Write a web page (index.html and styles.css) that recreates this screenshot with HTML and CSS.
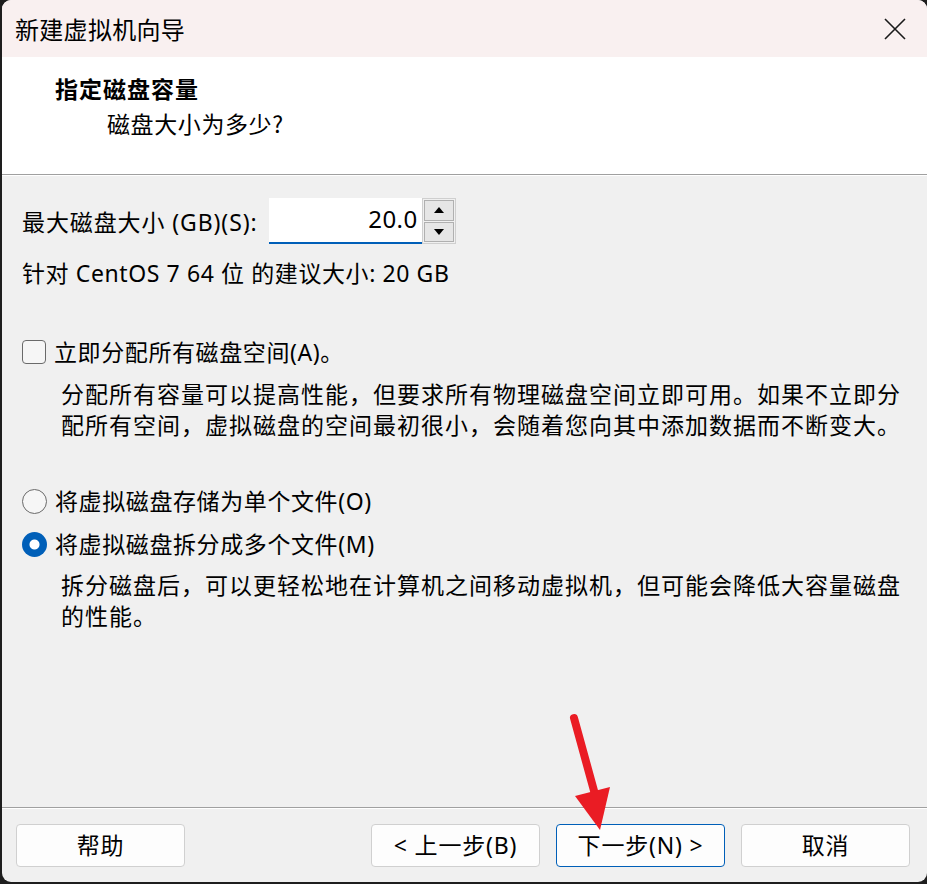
FILE: index.html
```html
<!DOCTYPE html>
<html lang="zh-CN">
<head>
<meta charset="utf-8">
<title>新建虚拟机向导</title>
<link rel="stylesheet" href="styles.css">
</head>
<body>
<div class="window">
  <div class="titlebar">
    <span class="title">新建虚拟机向导</span>
    <svg class="close" width="24" height="24" viewBox="0 0 24 24"><path d="M2 2 L22 22 M22 2 L2 22" stroke="#1a1a1a" stroke-width="1.6" fill="none"/></svg>
  </div>
  <div class="header">
    <div class="h-title">指定磁盘容量</div>
    <div class="h-sub">磁盘大小为多少?</div>
  </div>
  <div class="content">
    <div class="size-row">
      <span class="size-label">最大磁盘大小 (GB)(S):</span>
      <div class="spin">
        <div class="spin-input">20.0</div>
        <div class="spin-btns">
          <div class="spin-btn"><span class="tri-up"></span></div>
          <div class="spin-btn"><span class="tri-down"></span></div>
        </div>
      </div>
    </div>
    <div class="recommend">针对 CentOS 7 64 位 的建议大小: 20 GB</div>

    <div class="opt-row check-row"><span class="checkbox"></span><span>立即分配所有磁盘空间(A)。</span></div>
    <div class="desc desc1">分配所有容量可以提高性能，但要求所有物理磁盘空间立即可用。如果不立即分<br>配所有空间，虚拟磁盘的空间最初很小，会随着您向其中添加数据而不断变大。</div>

    <div class="opt-row radio-row1"><span class="radio"></span><span>将虚拟磁盘存储为单个文件(O)</span></div>
    <div class="opt-row radio-row2"><span class="radio checked"></span><span>将虚拟磁盘拆分成多个文件(M)</span></div>
    <div class="desc desc2">拆分磁盘后，可以更轻松地在计算机之间移动虚拟机，但可能会降低大容量磁盘<br>的性能。</div>
  </div>
  <div class="footer">
    <button class="btn help">帮助</button>
    <button class="btn">&lt; 上一步(B)</button>
    <button class="btn primary">下一步(N) &gt;</button>
    <button class="btn">取消</button>
  </div>
  <svg class="arrow" width="60" height="130" viewBox="0 0 60 130">
    <path d="M12 8 L34 88" stroke="#ea1c24" stroke-width="8" stroke-linecap="round" fill="none"/>
    <path d="M13 86 L48 77 L38 120 Z" fill="#ea1c24"/>
  </svg>
</div>
</body>
</html>
```
FILE: styles.css
```css
html, body {
  margin: 0;
  padding: 0;
}
body {
  width: 927px;
  height: 884px;
  background: #1e1e1e;
  font-family: "Segoe UI", "Noto Sans", "Noto Sans CJK SC", sans-serif;
  color: #000;
  overflow: hidden;
}
.window {
  position: relative;
  margin-left: 2px;
  width: 925px;
  height: 882px;
  border-radius: 9px;
  overflow: hidden;
  background: #f0f0f0;
  display: flex;
  flex-direction: column;
}
.titlebar {
  height: 57px;
  background: #f9f0f0;
  display: flex;
  align-items: center;
  justify-content: space-between;
  padding: 0 20px 0 13px;
  flex: none;
}
.title {
  font-family: "Noto Sans CJK SC", sans-serif;
  font-size: 24px;
  font-weight: 400;
  letter-spacing: 0.3px;
  margin-top: -1px;
}
.close {
  display: block;
  margin-top: 1px;
}
.header {
  flex: none;
  height: 118px;
  background: #fff;
  border-bottom: 1px solid #a0a0a0;
  box-shadow: 0 1px 0 #fff;
  box-sizing: border-box;
  padding: 14px 0 0 53px;
  font-family: "Noto Sans CJK SC", sans-serif;
  font-size: 23px;
}
.h-title {
  font-weight: 700;
  line-height: 35px;
  letter-spacing: 1px;
}
.h-sub {
  line-height: 35px;
  padding-left: 52px;
  letter-spacing: 0.6px;
}
.content {
  flex: 1;
  padding: 23px 0 0 20px;
  font-size: 23px;
  letter-spacing: 0.6px;
}
.size-row {
  display: flex;
  align-items: center;
  height: 46px;
}
.size-label {
  margin-right: 11px;
  letter-spacing: 0.9px;
}
.spin {
  display: flex;
  height: 46px;
}
.spin-input {
  width: 153px;
  box-sizing: border-box;
  background: #fff;
  border-bottom: 2px solid #005fb8;
  text-align: right;
  padding-right: 4px;
  line-height: 42px;
  font-size: 24px;
  letter-spacing: 0.4px;
}
.spin-btns {
  width: 34px;
  box-sizing: border-box;
  border: 1px solid #cfcfcf;
  display: flex;
  flex-direction: column;
  padding: 1px;
  gap: 1px;
}
.spin-btn {
  flex: 1;
  background: #e6e6e6;
  border: 1px solid #b0b0b0;
  display: flex;
  align-items: center;
  justify-content: center;
}
.tri-up {
  width: 0;
  height: 0;
  border-left: 5px solid transparent;
  border-right: 5px solid transparent;
  border-bottom: 6px solid #000;
}
.tri-down {
  width: 0;
  height: 0;
  border-left: 5px solid transparent;
  border-right: 5px solid transparent;
  border-top: 6px solid #000;
}
.recommend {
  margin-top: 14px;
  line-height: 30px;
}
.opt-row {
  display: flex;
  align-items: center;
  line-height: 30px;
  gap: 8px;
}
.check-row {
  margin-top: 49px;
}
.checkbox {
  width: 24px;
  height: 24px;
  box-sizing: border-box;
  border: 1.5px solid #6a6a6a;
  border-radius: 4px;
  background: #f6f6f6;
  flex: none;
}
.radio {
  width: 25px;
  height: 25px;
  box-sizing: border-box;
  border: 1.5px solid #6a6a6a;
  border-radius: 50%;
  background: #f6f6f6;
  flex: none;
}
.radio.checked {
  border: none;
  background: radial-gradient(circle, #fff 0 4.5px, #005fb8 5.5px);
}
.desc {
  padding-left: 39px;
  line-height: 31px;
  letter-spacing: 1px;
  font-family: "Noto Sans CJK SC", sans-serif;
}
.desc1 {
  margin-top: 11px;
}
.radio-row1 {
  margin-top: 46px;
}
.radio-row2 {
  margin-top: 13px;
}
.desc2 {
  margin-top: 10px;
}
.footer {
  flex: none;
  height: 75px;
  border-top: 1px solid #a0a0a0;
  box-shadow: inset 0 1px 0 #fff;
  box-sizing: border-box;
  display: flex;
  align-items: flex-start;
  padding: 16px 17px 0 14px;
  gap: 16px;
}
.btn {
  width: 169px;
  height: 43px;
  background: #fdfdfd;
  border: 1px solid #d0d0d0;
  border-radius: 4px;
  font-family: "Segoe UI", "Noto Sans", "Noto Sans CJK SC", sans-serif;
  font-size: 23px;
  letter-spacing: 0.8px;
  color: #000;
  padding: 0;
  line-height: 41px;
}
.help {
  margin-right: auto;
}
.primary {
  border-color: #005fb8;
}
.arrow {
  position: absolute;
  left: 560px;
  top: 710px;
}
```
